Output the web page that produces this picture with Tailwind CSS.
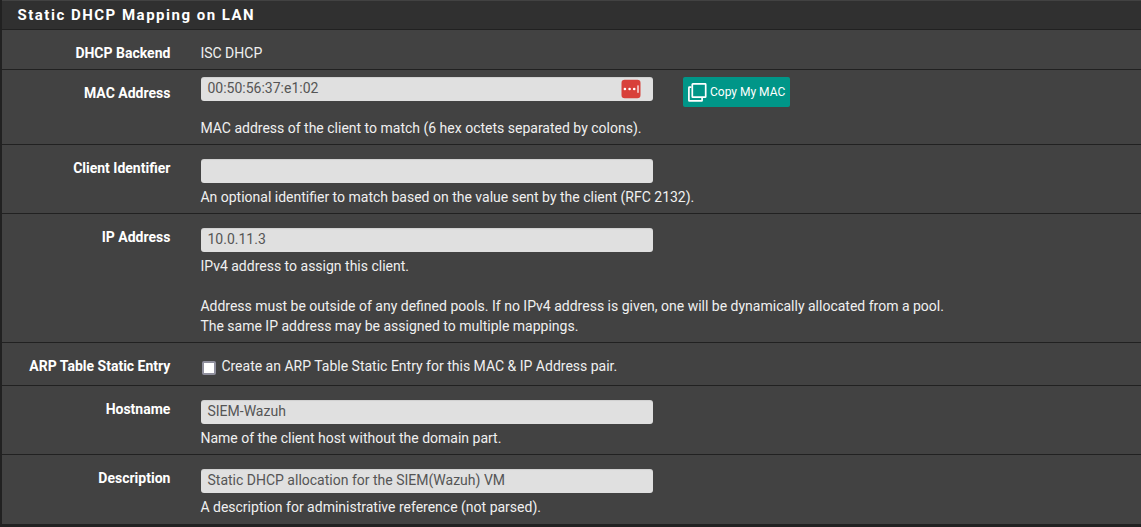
<!DOCTYPE html>
<html lang="en">
<head>
<meta charset="utf-8">
<title>Static DHCP Mapping on LAN</title>
<script src="https://cdn.jsdelivr.net/npm/@tailwindcss/browser@4"></script>
</head>
<body class="h-[527px] overflow-hidden bg-[#212121] pl-[2px] font-['Roboto',sans-serif] text-[14px] leading-[20px] text-[#f0f0f0]">
<main class="h-[524px] bg-[#424242]">
  <h2 class="h-[30px] border-t border-b border-t-[#424242] border-b-[#212121] bg-[#303030] pl-[15.5px] pt-[4px] text-[15px] font-bold tracking-[1.5px] text-white"><span>Static DHCP Mapping on LAN</span></h2>

  <div class="flex h-[40px] border-b border-[#212121] pt-[13px]">
    <div class="w-[168.4px] shrink-0 text-right font-bold text-white"><span>DHCP Backend</span></div>
    <div class="ml-[30px]"><span>ISC DHCP</span></div>
  </div>

  <div class="flex h-[75px] border-b border-[#212121]">
    <label class="w-[168.4px] shrink-0 pt-[13px] text-right font-bold text-white"><span>MAC Address</span></label>
    <div class="ml-[30px] pt-[7px]">
      <div class="ml-[0.6px] flex h-[41px] items-start">
        <div class="flex h-[24px] w-[452px] items-center justify-between rounded-[3px] bg-[#e0e0e0] pl-[6.5px] pr-[12px] text-[#555] shadow-[inset_0_1px_1px_rgba(0,0,0,0.075)]">
          <span class="-mt-[2px]">00:50:56:37:e1:02</span>
          <svg class="h-[20px] w-[20px]" viewBox="0 0 20 20"><rect x="0.5" y="0.7" width="19" height="18.6" rx="3.2" fill="#d8403a"/><g fill="#fff"><circle cx="3.9" cy="10" r="1.3"/><circle cx="8.6" cy="10" r="1.3"/><circle cx="13.2" cy="10" r="1.3"/><rect x="16.4" y="6.4" width="1.2" height="7.4"/></g></svg>
        </div>
        <button class="ml-[30px] flex h-[30px] w-[107px] items-center rounded-[2px] bg-[#009688] pl-[5px] text-[12px] text-white">
          <svg class="mr-[3px] h-[20px] w-[19px] shrink-0" viewBox="0 0 19 20" fill="none" stroke="#fff" stroke-width="1.7" stroke-linejoin="round"><rect x="4.3" y="1.9" width="13.4" height="13.3" rx="0.5"/><path d="M3.4 5.2H1.4a.5.5 0 0 0-.5.5V18.4a.5.5 0 0 0 .5.5H13.6a.5.5 0 0 0 .5-.5V16"/></svg>
          <span class="whitespace-nowrap">Copy My MAC</span>
        </button>
      </div>
      <p><span>MAC address of the client to match (6 hex octets separated by colons).</span></p>
    </div>
  </div>

  <div class="flex h-[69px] border-b border-[#212121]">
    <label class="w-[168.4px] shrink-0 pt-[13px] text-right font-bold text-white"><span>Client Identifier</span></label>
    <div class="ml-[30px] pt-[14px]">
      <div class="mb-[4px] ml-[0.6px] h-[24px] w-[452px] rounded-[3px] bg-[#e0e0e0] shadow-[inset_0_1px_1px_rgba(0,0,0,0.075)]"></div>
      <p><span>An optional identifier to match based on the value sent by the client (RFC 2132).</span></p>
    </div>
  </div>

  <div class="flex h-[129px] border-b border-[#212121]">
    <label class="w-[168.4px] shrink-0 pt-[13px] text-right font-bold text-white"><span>IP Address</span></label>
    <div class="ml-[30px] pt-[14px]">
      <div class="mb-[4px] ml-[0.6px] h-[24px] w-[452px] rounded-[3px] bg-[#e0e0e0] pl-[6.5px] pt-px text-[#555] shadow-[inset_0_1px_1px_rgba(0,0,0,0.075)]"><span>10.0.11.3</span></div>
      <p><span>IPv4 address to assign this client.</span></p>
      <p class="mt-[20px]"><span>Address must be outside of any defined pools. If no IPv4 address is given, one will be dynamically allocated from a pool.</span><br><span>The same IP address may be assigned to multiple mappings.</span></p>
    </div>
  </div>

  <div class="flex h-[43px] border-b border-[#212121] pt-[13px]">
    <div class="w-[168.4px] shrink-0 text-right font-bold text-white"><span>ARP Table Static Entry</span></div>
    <label class="ml-[31.6px] flex">
      <span class="mr-[5.4px] mt-[5px] h-[14px] w-[14px] rounded-[2px] border-2 border-[#8f8f9d] bg-white"></span>
      <span>Create an ARP Table Static Entry for this MAC &amp; IP Address pair.</span>
    </label>
  </div>

  <div class="flex h-[69px] border-b border-[#212121]">
    <label class="w-[168.4px] shrink-0 pt-[13px] text-right font-bold text-white"><span>Hostname</span></label>
    <div class="ml-[30px] pt-[14px]">
      <div class="mb-[4px] ml-[0.6px] h-[24px] w-[452px] rounded-[3px] bg-[#e0e0e0] pl-[6.5px] pt-px text-[#555] shadow-[inset_0_1px_1px_rgba(0,0,0,0.075)]"><span>SIEM-Wazuh</span></div>
      <p><span>Name of the client host without the domain part.</span></p>
    </div>
  </div>

  <div class="flex h-[69px]">
    <label class="w-[168.4px] shrink-0 pt-[13px] text-right font-bold text-white"><span>Description</span></label>
    <div class="ml-[30px] pt-[14px]">
      <div class="mb-[4px] ml-[0.6px] h-[24px] w-[452px] rounded-[3px] bg-[#e0e0e0] pl-[6.5px] pt-px text-[#555] shadow-[inset_0_1px_1px_rgba(0,0,0,0.075)]"><span>Static DHCP allocation for the SIEM(Wazuh) VM</span></div>
      <p><span>A description for administrative reference (not parsed).</span></p>
    </div>
  </div>
</main>
</body>
</html>
